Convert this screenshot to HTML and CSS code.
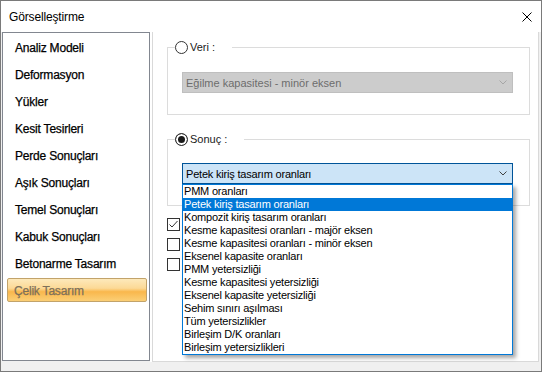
FILE: index.html
```html
<!DOCTYPE html>
<html lang="tr">
<head>
<meta charset="utf-8">
<title>Görselleştirme</title>
<link rel="stylesheet" href="styles.css">
</head>
<body>
<div class="window">
  <div class="titlebar">
    <span class="title">Görselleştirme</span>
    <svg class="close" width="10" height="10" viewBox="0 0 10 10"><path d="M0.5 0.5 L9.5 9.5 M9.5 0.5 L0.5 9.5" stroke="#000" stroke-width="1" fill="none"/></svg>
  </div>
  <div class="main">
    <div class="nav">
      <div class="nav-item">Analiz Modeli</div>
      <div class="nav-item">Deformasyon</div>
      <div class="nav-item">Yükler</div>
      <div class="nav-item">Kesit Tesirleri</div>
      <div class="nav-item">Perde Sonuçları</div>
      <div class="nav-item">Aşık Sonuçları</div>
      <div class="nav-item">Temel Sonuçları</div>
      <div class="nav-item">Kabuk Sonuçları</div>
      <div class="nav-item">Betonarme Tasarım</div>
      <div class="nav-item active">Çelik Tasarım</div>
    </div>
    <div class="sep"></div>
    <div class="content">
      <div class="group g1">
        <div class="legend"><span class="radio"></span><span class="legend-text">Veri :</span></div>
        <div class="combo disabled">
          <span>Eğilme kapasitesi - minör eksen</span>
          <svg class="chev" width="8" height="5" viewBox="0 0 8 5"><polyline points="0.5,0.5 4,4 7.5,0.5" fill="none" stroke="#a6a6a6" stroke-width="1"/></svg>
        </div>
      </div>
      <div class="group g2">
        <div class="legend"><span class="radio checked"></span><span class="legend-text">Sonuç :</span></div>
        <div class="combo active">
          <span>Petek kiriş tasarım oranları</span>
          <svg class="chev" width="8" height="5" viewBox="0 0 8 5"><polyline points="0.5,0.5 4,4 7.5,0.5" fill="none" stroke="#404040" stroke-width="1"/></svg>
        </div>
      </div>
      <div class="checks">
        <span class="check"><svg width="11" height="11" viewBox="0 0 11 11"><polyline points="1.5,5.5 4,8 9.5,2" fill="none" stroke="#333" stroke-width="1"/></svg></span>
        <span class="check"></span>
        <span class="check"></span>
      </div>
      <ul class="dropdown">
        <li>PMM oranları</li>
        <li class="sel">Petek kiriş tasarım oranları</li>
        <li>Kompozit kiriş tasarım oranları</li>
        <li>Kesme kapasitesi oranları - majör eksen</li>
        <li>Kesme kapasitesi oranları - minör eksen</li>
        <li>Eksenel kapasite oranları</li>
        <li>PMM yetersizliği</li>
        <li>Kesme kapasitesi yetersizliği</li>
        <li>Eksenel kapasite yetersizliği</li>
        <li>Sehim sınırı aşılması</li>
        <li>Tüm yetersizlikler</li>
        <li>Birleşim D/K oranları</li>
        <li>Birleşim yetersizlikleri</li>
      </ul>
    </div>
  </div>
  <div class="footer"></div>
</div>
</body>
</html>
```

FILE: styles.css
```css
* { box-sizing: border-box; }
html, body { margin: 0; padding: 0; background: #ffffff; }
body { font-family: "Liberation Sans", Arial, sans-serif; color: #000; }

.window {
  width: 542px;
  height: 372px;
  border: 1px solid #7a7a7a;
  background: #f0f0f0;
  display: flex;
  flex-direction: column;
}

.titlebar {
  height: 31px;
  background: #fff;
  display: flex;
  align-items: center;
  justify-content: space-between;
  padding: 0 9px 0 8px;
}
.title { font-size: 12px; letter-spacing: -0.15px; padding-top: 1px; }
.close { display: block; margin-top: 1px; }

.main {
  height: 330px;
  display: flex;
  align-items: flex-start;
  background: #f0f0f0;
}

.nav {
  margin-left: 1px;
  width: 148px;
  height: 329px;
  border: 1px solid #828790;
  background: #fff;
  padding: 2px 0 0 4px;
  display: flex;
  flex-direction: column;
  gap: 3px;
}
.nav-item {
  height: 24px;
  width: 140px;
  display: flex;
  align-items: center;
  padding: 1px 0 0 7px;
  font-size: 12px;
  letter-spacing: -0.2px;
  color: #000;
  -webkit-text-stroke: 0.25px #000;
  border: 1px solid transparent;
}
.nav-item.active {
  border-color: #c2a36a;
  border-radius: 2px;
  color: #7d705a;
  -webkit-text-stroke: 0.25px #7d705a;
  background: linear-gradient(#fde9bb 0%, #fcd996 42%, #f9b74c 58%, #fbcf76 100%);
  padding-left: 6px;
}

.sep { width: 2px; height: 330px; background: #fff; }

.content {
  position: relative;
  width: 387px;
  height: 330px;
  background: #fff;
  border: 1px solid #d9d9d9;
  border-top: none;
  display: flex;
  flex-direction: column;
  align-items: flex-start;
  padding-left: 14px;
}

.group {
  width: 363px;
  border: 1px solid #dcdcdc;
  display: flex;
  flex-direction: column;
  align-items: flex-start;
}
.g1 { margin-top: 15px; height: 68px; }
.g2 { margin-top: 24px; height: 67px; }

.legend {
  margin: -7px 0 0 7px;
  height: 13px;
  display: flex;
  align-items: center;
  background: #fff;
  padding-right: 17px;
  gap: 2px;
  font-size: 11px;
  color: #1a1a1a;
}
.legend-text { line-height: 13px; }

.radio {
  width: 13px;
  height: 13px;
  border: 1px solid #333;
  border-radius: 50%;
  background: #fff;
}
.radio.checked {
  background: #1a1a1a;
  box-shadow: inset 0 0 0 2px #fff;
}

.combo {
  margin-left: 14px;
  width: 331px;
  height: 21px;
  display: flex;
  align-items: center;
  justify-content: space-between;
  padding: 0 5px 0 3px;
  font-size: 11px;
}
.g1 .combo { margin-top: 18px; }
.g2 .combo { margin-top: 17px; }
.combo.disabled {
  background: #cccccc;
  border: 1px solid #bfbfbf;
  color: #6d6d6d;
}
.combo.active {
  background: #cce4f7;
  border: 1px solid #005499;
  color: #000;
  letter-spacing: -0.2px;
}
.chev { display: block; }

.checks {
  margin-top: 12px;
  display: flex;
  flex-direction: column;
  gap: 7px;
}
.check {
  width: 13px;
  height: 13px;
  border: 1px solid #333;
  background: #fff;
  display: block;
}
.check svg { display: block; }

.dropdown {
  position: absolute;
  left: 29px;
  top: 152px;
  width: 331px;
  height: 171px;
  margin: 0;
  padding: 0;
  list-style: none;
  background: #fff;
  border: 1px solid #0078d7;
  box-shadow: 3px 3px 4px rgba(0, 0, 0, 0.35);
  font-size: 11px;
  letter-spacing: -0.2px;
}
.dropdown li {
  height: 13px;
  line-height: 13px;
  padding-left: 1px;
  white-space: nowrap;
  color: #000;
}
.dropdown li.sel { background: #0078d7; color: #fff; }

.footer { height: 9px; background: #f0f0f0; }
```
